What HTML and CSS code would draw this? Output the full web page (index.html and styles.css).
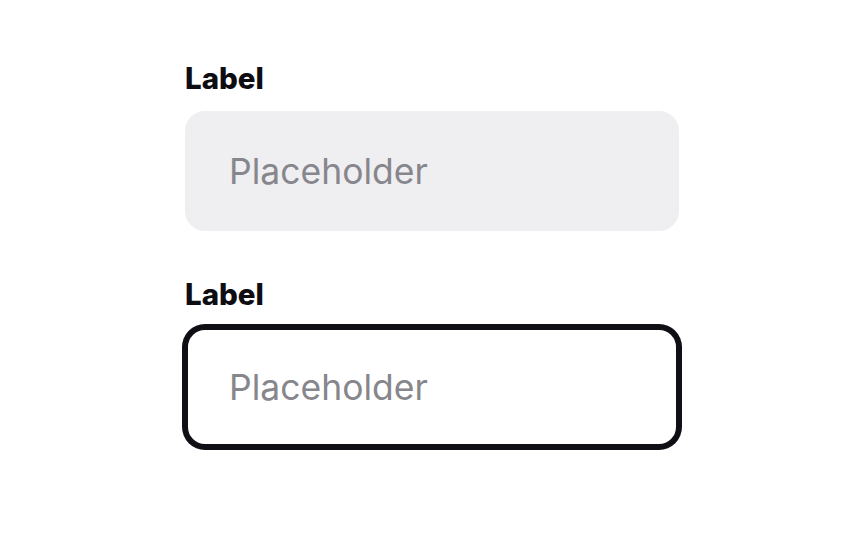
FILE: index.html
```html
<!DOCTYPE html>
<html lang="en">
<head>
<meta charset="utf-8">
<title>Inputs</title>
<link rel="stylesheet" href="styles.css">
</head>
<body>
<main class="form">
  <div class="field">
    <label class="label" for="a">Label</label>
    <input class="input" id="a" type="text" placeholder="Placeholder">
  </div>
  <div class="field">
    <label class="label" for="b">Label</label>
    <input class="input input-focus" id="b" type="text" placeholder="Placeholder">
  </div>
</main>
</body>
</html>
```
FILE: styles.css
```css
* { box-sizing: border-box; }
html, body { margin: 0; padding: 0; background: #ffffff; }
body {
  width: 864px;
  height: 540px;
  font-family: Inter, "Noto Sans", sans-serif;
}
.form {
  width: 494px;
  margin: 0 auto;
  padding-top: 61px;
  display: flex;
  flex-direction: column;
  gap: 46px;
}
.field {
  display: flex;
  flex-direction: column;
  gap: 16px;
}
.label {
  font-size: 29.5px;
  line-height: 34px;
  font-weight: 800;
  color: #0d0d12;
}
.input {
  width: 494px;
  height: 120px;
  border: 3px solid #efeff1;
  border-radius: 20px;
  background: #efeff1;
  padding: 0 0 0 41px;
  font-family: inherit;
  font-size: 35.5px;
  color: #0d0d12;
  outline: none;
}
.input::placeholder { color: #86868c; opacity: 1; }
.input-focus {
  background: #ffffff;
  border-color: #0f0f15;
  box-shadow: 0 0 0 3px #0f0f15;
}
```
